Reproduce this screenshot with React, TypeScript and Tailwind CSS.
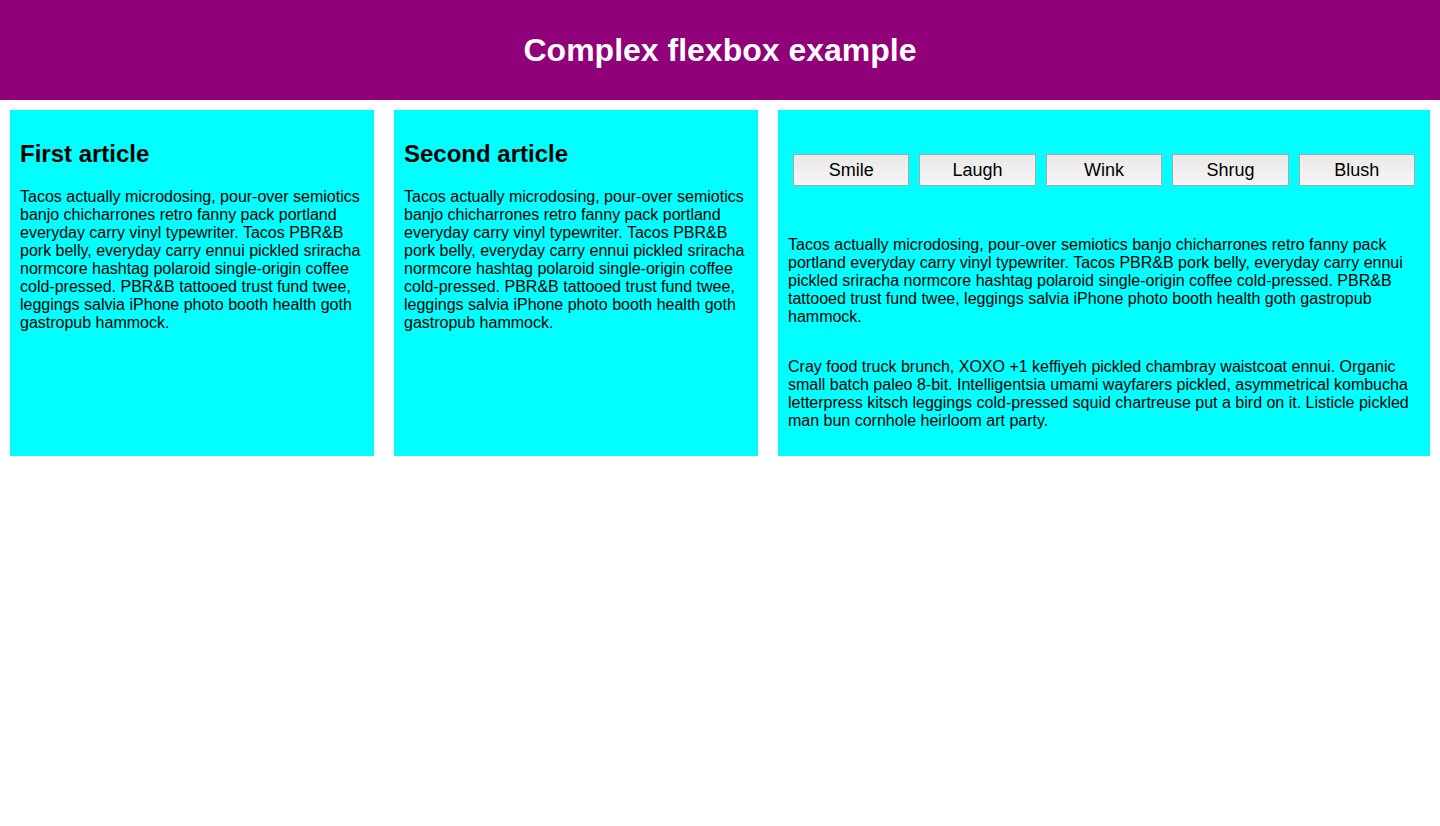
import React from 'react';

const tacos =
  'Tacos actually microdosing, pour-over semiotics banjo chicharrones retro fanny pack portland everyday carry vinyl typewriter. Tacos PBR&B pork belly, everyday carry ennui pickled sriracha normcore hashtag polaroid single-origin coffee cold-pressed. PBR&B tattooed trust fund twee, leggings salvia iPhone photo booth health goth gastropub hammock.';

const cray =
  'Cray food truck brunch, XOXO +1 keffiyeh pickled chambray waistcoat ennui. Organic small batch paleo 8-bit. Intelligentsia umami wayfarers pickled, asymmetrical kombucha letterpress kitsch leggings cold-pressed squid chartreuse put a bird on it. Listicle pickled man bun cornhole heirloom art party.';

const buttons = ['Smile', 'Laugh', 'Wink', 'Shrug', 'Blush'];

function Article({ title }: { title: string }) {
  return (
    <article className="w-[364px] shrink-0 bg-[#00ffff] p-[10px]">
      <h2 className="mt-[20px] text-[24px] font-bold leading-[28px]">{title}</h2>
      <p className="mt-[20px] text-[16px] leading-[18px]">{tacos}</p>
    </article>
  );
}

export default function App() {
  return (
    <div className="min-h-[826px] bg-white text-black font-['Liberation_Sans',Arial,sans-serif]">
      <header className="flex h-[100px] items-center justify-center bg-[#900079]">
        <h1 className="text-[32px] font-bold text-white">Complex flexbox example</h1>
      </header>
      <section className="flex gap-5 p-[10px]">
        <Article title="First article" />
        <Article title="Second article" />
        <article className="flex flex-1 flex-col bg-[#00ffff] p-[10px]">
          <div className="flex h-[100px] flex-wrap items-center justify-around">
            {buttons.map((b) => (
              <button
                key={b}
                className="m-[5px] h-[32px] flex-1 border border-[#a8a8a8] bg-gradient-to-b from-[#e9e9e9] to-[#f6f6f6] text-[18px] leading-[27px]"
              >
                {b}
              </button>
            ))}
          </div>
          <p className="my-4 text-[16px] leading-[18px]">{tacos}</p>
          <p className="my-4 text-[16px] leading-[18px]">{cray}</p>
        </article>
      </section>
    </div>
  );
}
